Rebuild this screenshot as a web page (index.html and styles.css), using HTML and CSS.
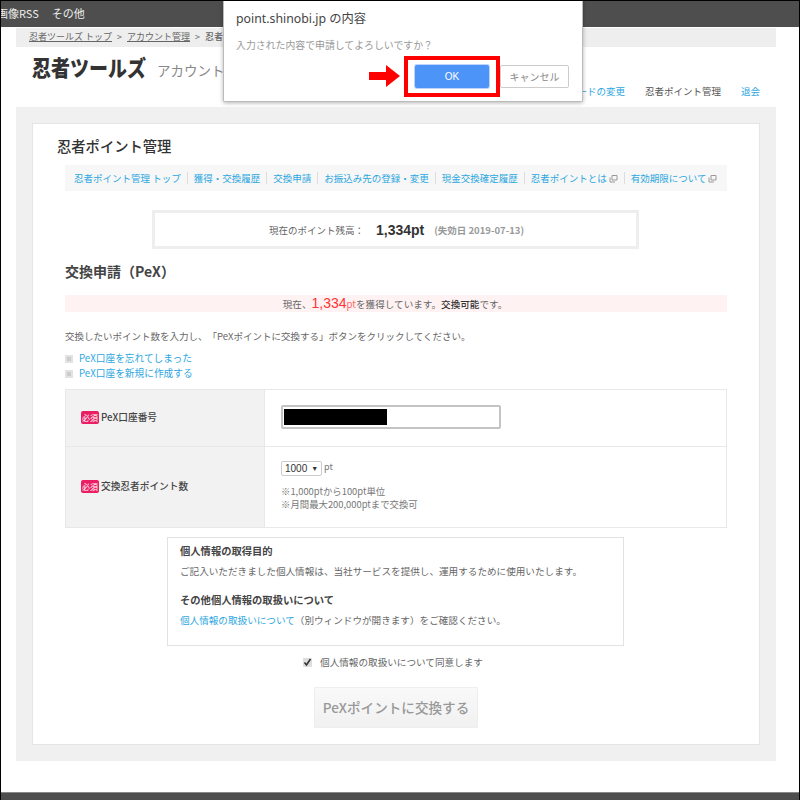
FILE: index.html
```html
<!DOCTYPE html>
<html lang="ja">
<head>
<meta charset="utf-8">
<title>忍者ポイント管理</title>
<link rel="stylesheet" href="styles.css">
</head>
<body>
<div class="frame">
  <div class="topbar"><div class="topclip"><span>画像RSS</span><span>その他</span></div></div>
  <div class="crumbs"><a>忍者ツールズ トップ</a><i>&gt;</i><a>アカウント管理</a><i>&gt;</i><b>忍者</b></div>
  <header class="head">
    <div class="logo">忍者ツールズ</div>
    <div class="acct">アカウント</div>
  </header>
  <nav class="usernav"><a>ードの変更</a><span>忍者ポイント管理</span><a>退会</a></nav>
  <main class="panel">
    <div class="card">
      <h1 class="title">忍者ポイント管理</h1>
      <div class="subnav">
        <a>忍者ポイント管理 トップ</a><a>獲得・交換履歴</a><a>交換申請</a><a>お振込み先の登録・変更</a><a>現金交換確定履歴</a>
        <a>忍者ポイントとは<svg class="ext" viewBox="0 0 9 9"><path d="M3 1.500h5v4.500H3z M1 3.500v4.500h5" fill="none" stroke="#999"/></svg></a>
        <a>有効期限について<svg class="ext" viewBox="0 0 9 9"><path d="M3 1.500h5v4.500H3z M1 3.500v4.500h5" fill="none" stroke="#999"/></svg></a>
      </div>
      <div class="balance"><span>現在のポイント残高：</span><strong>1,334pt</strong><em>(失効日 2019-07-13)</em></div>
      <h2 class="sub">交換申請（PeX）</h2>
      <div class="alert">現在、<span class="num">1,334</span><span class="pt">pt</span>を獲得しています。<b>交換可能</b>です。</div>
      <p class="lead">交換したいポイント数を入力し、「PeXポイントに交換する」ボタンをクリックしてください。</p>
      <ul class="links">
        <li><a>PeX口座を忘れてしまった</a></li>
        <li><a>PeX口座を新規に作成する</a></li>
      </ul>
      <div class="form">
        <div class="row r1">
          <div class="th"><span class="req">必須</span>PeX口座番号</div>
          <div class="td"><div class="input"><div class="mask"></div></div></div>
        </div>
        <div class="row r2">
          <div class="th"><span class="req">必須</span>交換忍者ポイント数</div>
          <div class="td col">
            <div class="selrow"><div class="select">1000<span class="tri">▼</span></div><span class="unit">pt</span></div>
            <p class="note">※1,000ptから100pt単位<br>※月間最大200,000ptまで交換可</p>
          </div>
        </div>
      </div>
      <div class="privacy">
        <h3>個人情報の取得目的</h3>
        <p>ご記入いただきました個人情報は、当社サービスを提供し、運用するために使用いたします。</p>
        <h3 class="h2">その他個人情報の取扱いについて</h3>
        <p><a>個人情報の取扱いについて</a>（別ウィンドウが開きます）をご確認ください。</p>
      </div>
      <div class="agree"><span class="check"><svg viewBox="0 0 9 9"><path d="M1.500 4.500l2 2.500 4-6" fill="none" stroke="#333" stroke-width="1.600"/></svg></span>個人情報の取扱いについて同意します</div>
      <div class="submit">PeXポイントに交換する</div>
    </div>
  </main>
  <div class="bottombar"></div>

  <div class="dialog">
    <div class="dlg-title">point.shinobi.jp の内容</div>
    <div class="dlg-msg">入力された内容で申請してよろしいですか？</div>
    <div class="dlg-actions">
      <div class="btn-ok">OK</div>
      <div class="btn-cancel">キャンセル</div>
    </div>
  </div>
  <svg class="arrow" viewBox="0 0 31 22"><path d="M0 7h17V0l14 11L17 22v-7H0z" fill="#f00"/></svg>
  <div class="redbox"></div>
</div>
</body>
</html>
```
FILE: styles.css
```css
* { box-sizing: border-box; margin: 0; padding: 0; }
html, body { width: 800px; height: 800px; overflow: hidden; background: #fff; }
body { font-family: "Noto Sans CJK JP", "Noto Sans", sans-serif; font-size: 10px; color: #666; text-spacing-trim: space-all; }
a { color: #2ea7e0; }
.frame { position: relative; width: 800px; height: 800px; border: 1px solid #000; border-width: 1px 1px 0 1px; overflow: hidden; }

.topbar { height: 26px; background: #4e4e4e; color: #eee; font-size: 11px; line-height: 25px; overflow: hidden; }
.topclip { display: flex; gap: 13px; margin-left: -4px; }

.crumbs { width: 760px; height: 19px; margin: 1px 0 0 15px; background: #eee; padding-left: 13px; font-size: 9px; line-height: 18px; display: flex; color: #666; }
.crumbs a { color: #666; text-decoration: underline; }
.crumbs i { font-style: normal; margin: 0 5px; }
.crumbs b { font-weight: 500; }

.head { height: 45px; margin-left: 31px; display: flex; align-items: flex-start; padding-top: 6px; }
.logo { font-size: 19px; font-weight: 900; color: #333; line-height: 28px; transform: scaleY(1.15); }
.acct { font-size: 13.500px; color: #888; margin-left: 11px; line-height: 34px; }

.usernav { height: 14px; margin-top: -8px; padding-right: 39px; display: flex; justify-content: flex-end; font-size: 9.500px; line-height: 14px; gap: 20px; }
.usernav span { color: #555; }

.panel { width: 760px; height: 654px; margin: 9px 0 0 15px; background: #f0f0f0; padding: 16px; }
.card { height: 622px; background: #fff; border: 1px solid #e5e5e5; padding: 12px 32px 0 32px; display: flex; flex-direction: column; align-items: flex-start; }

.title { font-size: 14.300px; font-weight: 500; color: #333; line-height: 20px; margin-left: -8px; }
.subnav { width: 662px; height: 26px; margin-top: 9px; background: #f7f7f7; padding-left: 9px; display: flex; align-items: center; font-size: 9.500px; }
.subnav a { padding-right: 6px; margin-right: 6px; border-right: 1px solid #ddd; line-height: 12px; white-space: nowrap; }
.subnav a:last-child { border: 0; }
.ext { width: 9px; height: 9px; margin-left: 2px; vertical-align: -1px; }

.balance { width: 487px; height: 39px; margin: 19px 0 0 87px; padding-left: 2px; border: 3px solid #eee; display: flex; align-items: center; justify-content: center; font-size: 9.500px; }
.balance strong { font-family: "Liberation Sans", sans-serif; font-size: 14px; color: #333; margin-left: 12px; }
.balance em { font-style: normal; font-weight: 700; color: #999; margin-left: 10px; font-size: 9.500px; }

.sub { font-size: 14px; font-weight: 700; color: #444; margin-top: 12px; line-height: 20px; }
.alert { width: 662px; height: 17px; margin-top: 14px; padding-right: 2px; background: #fff2f2; text-align: center; font-size: 9.600px; line-height: 17px; white-space: nowrap; }
.alert .num { font-family: "Liberation Sans", sans-serif; color: #f33; font-size: 14px; }
.alert .pt { color: #f66; }
.alert b { color: #333; font-weight: 500; }

.lead { margin-top: 16px; line-height: 16px; font-size: 9.500px; white-space: nowrap; }
.links { list-style: none; margin-top: 7px; }
.links li { height: 14.500px; line-height: 14.500px; padding-left: 14px; position: relative; font-size: 9.700px; }
.links li::before { content: ""; box-sizing: border-box; position: absolute; left: 0; top: 4px; width: 8px; height: 8px; background: #ccc; border: 2px solid #e2e2e2; }

.form { width: 662px; margin-top: 9px; border: 1px solid #e8e8e8; }
.row { display: flex; }
.r1 { height: 57px; border-bottom: 1px solid #e8e8e8; }
.r2 { height: 80px; }
.th { width: 199px; background: #f2f2f2; border-right: 1px solid #e8e8e8; display: flex; align-items: center; padding: 0 0 2px 15px; font-weight: 500; font-size: 9.700px; color: #444; }
.req { width: 18px; height: 13px; margin-right: 2px; background: #e91e63; color: #fff; font-size: 8px; font-weight: 400; line-height: 13px; text-align: center; border-radius: 2px; }
.td { flex: 1; padding: 15px 15px 15px 16px; }
.input { width: 220px; height: 24px; border: 2px solid #c4c4c4; border-radius: 2px; padding: 1px; }
.mask { width: 103px; height: 16px; margin-top: 1px; background: #000; }
.col { padding-top: 14px; }
.selrow { display: flex; gap: 2px; align-items: flex-start; font-size: 10px; }
.unit { font-size: 9px; line-height: 12px; color: #777; }
.select { width: 41px; height: 15px; border: 1px solid #ccc; border-radius: 2px; padding-left: 3px; font-family: "Liberation Sans", sans-serif; font-size: 10px; line-height: 13px; color: #333; display: flex; gap: 4px; }
.tri { font-size: 7px; color: #333; }
.note { margin-top: 9px; line-height: 13px; font-size: 9.400px; color: #777; }

.privacy { width: 457px; height: 109px; margin: 9px 0 0 102px; border: 1px solid #e2e2e2; padding: 6px 12px 0; font-size: 9.600px; }
.privacy h3 { font-size: 10.300px; font-weight: 700; color: #444; line-height: 14px; }
.privacy p { margin-top: 6px; line-height: 14px; }
.privacy .h2 { margin-top: 15px; }

.agree { align-self: center; margin: 8px 6px 0 0; display: flex; align-items: center; font-size: 9.600px; line-height: 16px; }
.check { width: 9px; height: 9px; background: #ddd; border-radius: 1px; margin-right: 8px; display: block; }
.check svg { display: block; }

.submit { align-self: center; width: 164px; height: 41px; margin-top: 17px; background: linear-gradient(#f9f9f9, #f1f1f1); border: 1px solid #eee; color: #999; font-size: 13.600px; font-weight: 500; text-align: center; line-height: 39px; }

.bottombar { height: 8px; margin-top: 31px; background: #4e4e4e; border-top: 1px solid #888; }

.dialog { position: absolute; left: 222px; top: -1px; width: 360px; height: 102px; background: #fff; border: 1px solid #bbb; border-top: 0; border-radius: 0 0 2px 2px; box-shadow: 0 1px 4px rgba(0,0,0,.3); padding: 12px 12px; }
.dlg-title { font-family: "Noto Sans", "Noto Sans CJK JP", sans-serif; font-size: 12.300px; color: #444; line-height: 14px; white-space: nowrap; }
.dlg-msg { margin-top: 12px; font-size: 9.900px; color: #999; line-height: 14px; }
.dlg-actions { position: absolute; left: 191px; top: 65px; display: flex; gap: 11px; }
.btn-ok { width: 74px; height: 23px; background: #4d94f8; color: #fff; border-radius: 2px; font-family: "Liberation Sans", sans-serif; font-size: 10px; line-height: 23px; text-align: center; box-shadow: 0 0 0 1px #bcd4fa; }
.btn-cancel { width: 69px; height: 23px; border: 1px solid #ccc; border-radius: 2px; color: #888; font-size: 10px; line-height: 21px; text-align: center; }
.arrow { position: absolute; left: 368px; top: 64px; width: 31px; height: 22px; }
.redbox { position: absolute; left: 403px; top: 55px; width: 96px; height: 41px; border: 4px solid #f00; }
```
